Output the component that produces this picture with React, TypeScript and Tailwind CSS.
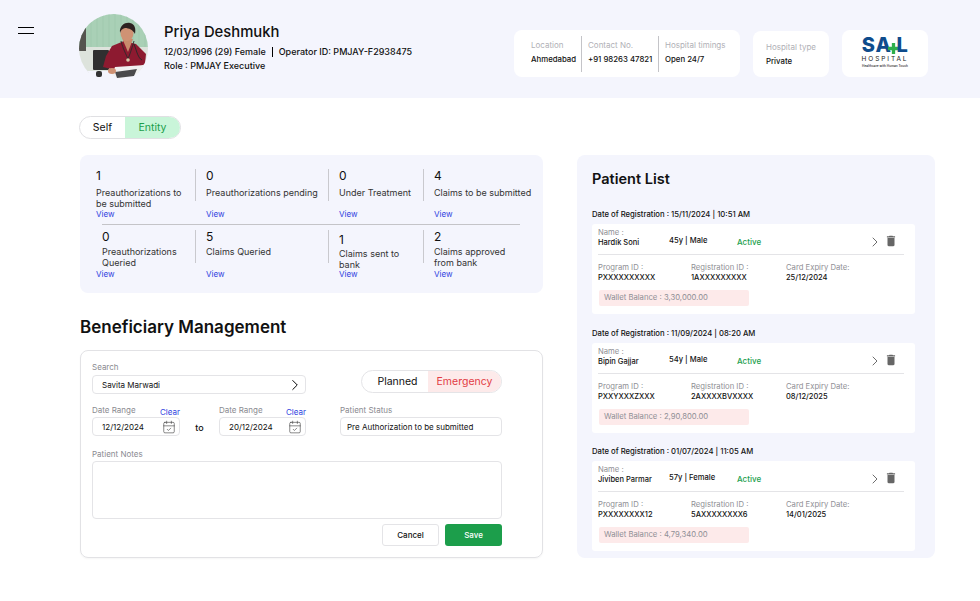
import { CalendarCheck, ChevronRight } from "lucide-react";
import { MdDelete } from "react-icons/md";

const topStats = [
  { n: 1, label: "Preauthorizations to be submitted", w: "w-[99px]", first: true },
  { n: 0, label: "Preauthorizations pending", w: "w-[133px]" },
  { n: 0, label: "Under Treatment", w: "w-[95px]" },
  { n: 4, label: "Claims to be submitted", w: "w-[112px]" },
];

const patients = [
  {
    reg: "15/11/2024 | 10:51 AM",
    name: "Hardik Soni",
    age: "45y | Male",
    program: "PXXXXXXXXXX",
    regId: "1AXXXXXXXXX",
    expiry: "25/12/2024",
    wallet: "3,30,000.00",
  },
  {
    reg: "11/09/2024 | 08:20 AM",
    name: "Bipin Gajjar",
    age: "54y | Male",
    program: "PXXYXXXZXXX",
    regId: "2AXXXXBVXXXX",
    expiry: "08/12/2025",
    wallet: "2,90,800.00",
  },
  {
    reg: "01/07/2024 | 11:05 AM",
    name: "Jiviben Parmar",
    age: "57y | Female",
    program: "PXXXXXXXX12",
    regId: "5AXXXXXXXX6",
    expiry: "14/01/2025",
    wallet: "4,79,340.00",
  },
];

function Avatar() {
  return (
    <svg viewBox="0 0 69 69" className="h-[69px] w-[69px] shrink-0 self-start rounded-full">
      <rect width="69" height="69" fill="#f4f5fd" />
      <rect width="69" height="33" fill="#a9d0b6" />
      {[6, 12, 18, 24, 30, 36, 42, 48, 54, 60, 66].map((x) => (
        <line key={x} x1={x} y1="0" x2={x} y2="33" stroke="#a0c9ae" strokeWidth="1" />
      ))}
      <rect y="33" width="69" height="26" fill="#dde3dc" />
      <rect x="0" y="13" width="7" height="24" fill="#55544f" />
      <rect x="14" y="36" width="16" height="20" rx="1" fill="#2f2f30" />
      <path d="M33 32 45 27 57 30 67 40 66 50 60 53 32 55 24 53 27 42Z" fill="#8d1a30" />
      <path d="M43 24 49 38 54 25Z" fill="#c98a6c" />
      <ellipse cx="48" cy="19" rx="6.500" ry="8" fill="#cf9274" />
      <path d="M41 19C40 11 47 8 51 9 56 10 57 15 56 20 54 16 50 14 46 14 43 15 42 16 41 19Z" fill="#2d2220" />
      <path d="M42 27C44 35 47 40 49 45 51 40 53 34 55 27" fill="none" stroke="#2e2a2a" strokeWidth="0.9" />
      <path d="M55 30C58 38 59 44 63 46" fill="none" stroke="#2e2a2a" strokeWidth="1" />
      <circle cx="49" cy="46" r="1.800" fill="#d8c9a8" />
      <rect y="57" width="69" height="12" fill="#f4f5fd" />
      <path d="M36 53 66 51 60 60 40 65 33 61Z" fill="#f1f1f1" />
      <path d="M36 58 58 55 55 62 38 64Z" fill="#4a4a4c" />
      <ellipse cx="33" cy="57" rx="4" ry="3" fill="#cf9274" />
      <rect x="17" y="57" width="6" height="6" rx="2" fill="#333" />
    </svg>
  );
}

function Logo() {
  return (
    <div className="mt-[-1px] flex flex-col items-center">
      <div className="flex h-[15px] items-center text-[20px] leading-[15px] font-extrabold tracking-[0.5px] text-[#0f4c8c]">
        <span>S</span>
        <span>A</span>
        <svg viewBox="0 0 10 10" className="-mx-[3px] mt-[6px] h-[11px] w-[11px] text-[#2fae4a]">
          <path d="M3.5 0h3v3.5H10v3H6.500V10h-3V6.500H0v-3h3.500Z" fill="currentColor" />
        </svg>
        <span>L</span>
      </div>
      <div className="mt-[3px] text-[6.500px] leading-[7px] tracking-[1.900px] text-[#222]">HOSPITAL</div>
      <div className="mt-[1px] text-[3.200px] leading-[4px] font-medium text-[#222]">Healthcare with Human Touch</div>
    </div>
  );
}

function InfoCell({ label, value, className }: { label: string; value: string; className: string }) {
  return (
    <div className={className}>
      <div className="text-[8px] leading-[10px] text-[#b0b0b6]">{label}</div>
      <div className="mt-[4px] text-[7.800px] leading-[10px] font-medium text-[#111]">{value}</div>
    </div>
  );
}

function Header() {
  return (
    <header className="flex h-[98px] bg-[#f4f5fd]">
      <div className="mt-[27px] ml-[18px] flex h-[7px] w-[16px] flex-col justify-between">
        <div className="h-px bg-black" />
        <div className="h-px bg-black" />
      </div>
      <div className="mt-[14px] ml-[45px]">
        <Avatar />
      </div>
      <div className="mt-[23px] ml-[16px] w-[350px] text-[#111]">
        <div className="text-[14.800px] leading-[19px] font-medium">Priya Deshmukh</div>
        <div className="mt-[3px] flex items-center text-[9px] leading-[14px] font-medium">
          12/03/1996 (29) Female
          <span className="mx-[6px] h-[10px] w-px bg-black" />
          Operator ID: PMJAY-F2938475
        </div>
        <div className="text-[9px] leading-[14px] font-medium">Role : PMJAY Executive</div>
      </div>
      <div className="mt-[30px] flex h-[47px] w-[226px] items-center rounded-[8px] bg-white pb-[4px] pl-[17px]">
        <InfoCell label="Location" value="Ahmedabad" className="w-[50px]" />
        <div className="mt-[4px] h-[36px] w-px bg-[#c4c4c8]" />
        <InfoCell label="Contact No." value="+91 98263 47821" className="w-[76px] pl-[6px]" />
        <div className="mt-[4px] h-[36px] w-px bg-[#c4c4c8]" />
        <InfoCell label="Hospital timings" value="Open 24/7" className="pl-[6px]" />
      </div>
      <div className="mt-[31px] ml-[13px] flex h-[46px] w-[76px] items-center rounded-[8px] bg-white pl-[13px]">
        <InfoCell label="Hospital type" value="Private" className="" />
      </div>
      <div className="mt-[30px] ml-[13px] flex h-[47px] w-[86px] items-center justify-center rounded-[8px] bg-white">
        <Logo />
      </div>
    </header>
  );
}

function StatCell({ n, label, w, first }: { n: number; label: string; w: string; first?: boolean }) {
  return (
    <div className={w}>
      <div className={first ? "h-[32px] pr-[8px]" : "h-[32px] border-l border-[#c9c9ce] pl-[10px]"}>
        <div className="text-[12px] leading-[14px] text-[#111]">{n}</div>
        <div className="mt-[4px] text-[9px] leading-[11px] text-[#333]">{label}</div>
      </div>
      <a className={first ? "mt-[8px] block text-[8px] leading-[10px] text-[#2f3fe0]" : "mt-[8px] block pl-[11px] text-[8px] leading-[10px] text-[#2f3fe0]"}>
        View
      </a>
    </div>
  );
}

function BottomStat({ n, label, w, first, low }: { n: number; label: string; w: string; first?: boolean; low?: boolean }) {
  let box = "h-[33px] border-l border-[#c9c9ce] pl-[10px]";
  if (first) box = "h-[33px] pl-[6px]";
  if (low) box = "h-[33px] border-l border-[#c9c9ce] pt-[3px] pr-[16px] pl-[10px]";
  return (
    <div className={w}>
      <div className={box}>
        <div className="text-[12px] leading-[14px] text-[#111]">{n}</div>
        <div className={low ? "mt-[1px] text-[9px] leading-[11px] text-[#333]" : "mt-[2px] text-[9px] leading-[11px] text-[#333]"}>{label}</div>
      </div>
      <a className={first ? "mt-[6px] block text-[8px] leading-[10px] text-[#2f3fe0]" : "mt-[6px] block pl-[11px] text-[8px] leading-[10px] text-[#2f3fe0]"}>
        View
      </a>
    </div>
  );
}

function StatsPanel() {
  return (
    <section className="h-[138px] rounded-[8px] bg-[#f4f5fd] pt-[14px] pl-[16px]">
      <div className="flex">
        {topStats.map((s) => (
          <StatCell key={s.label} n={s.n} label={s.label} w={s.w} first={s.first} />
        ))}
      </div>
      <div className="mt-[5px] ml-[6px] h-px w-[418px] bg-[#c4c4c8]" />
      <div className="mt-[5px] flex">
        <BottomStat n={0} label="Preauthorizations Queried" w="w-[99px]" first />
        <BottomStat n={5} label="Claims Queried" w="w-[133px]" />
        <BottomStat n={1} label="Claims sent to bank" w="w-[95px]" low />
        <BottomStat n={2} label="Claims approved from bank" w="w-[90px]" />
      </div>
    </section>
  );
}

function FieldBox({ children, className }: { children: React.ReactNode; className: string }) {
  return (
    <div className={"flex h-[19px] items-center justify-between rounded-[4px] border border-[#e4e4e7] bg-white text-[8px] text-[#111] " + className}>
      {children}
    </div>
  );
}

function DateField({ value, className }: { value: string; className: string }) {
  return (
    <div className={className}>
      <div className="flex h-[12px] items-start justify-between">
        <span className="text-[8px] leading-[10px] text-[#8a8a90]">Date Range</span>
        <span className="mt-[2px] text-[8px] leading-[10px] text-[#2f3fe0]">Clear</span>
      </div>
      <FieldBox className="pr-[3px] pl-[9px]">
        {value}
        <CalendarCheck size={14} strokeWidth={1} className="text-[#333]" />
      </FieldBox>
    </div>
  );
}

function BeneficiaryForm() {
  return (
    <section className="mt-[23px]">
      <h2 className="text-[17px] leading-[22px] font-semibold text-[#111]">Beneficiary Management</h2>
      <div className="mt-[12px] h-[208px] rounded-[8px] border border-[#e2e2e5] pt-[11px] pl-[11px] shadow-[0_1px_2px_rgba(0,0,0,0.04)]">
        <div className="flex">
          <div className="w-[214px]">
            <div className="text-[8px] leading-[10px] text-[#8a8a90]">Search</div>
            <FieldBox className="mt-[3px] pr-[1px] pl-[9px]">
              Savita Marwadi
              <ChevronRight size={18} strokeWidth={1.3} className="text-black" />
            </FieldBox>
          </div>
          <div className="mt-[8px] ml-[55px] flex h-[23px] w-[141px] overflow-hidden rounded-full border border-[#e4e4e7] text-[10.500px]">
            <div className="flex w-[66px] items-center justify-center pl-[5px] text-[#111]">Planned</div>
            <div className="flex flex-1 items-center justify-center bg-[#fdeaea] text-[#e23b44]">Emergency</div>
          </div>
        </div>
        <div className="mt-[11px] flex">
          <DateField value="12/12/2024" className="w-[88px]" />
          <div className="mt-[17px] w-[39px] text-center text-[9px] leading-[12px] font-medium text-[#111]">to</div>
          <DateField value="20/12/2024" className="w-[87px]" />
          <div className="ml-[34px] w-[162px]">
            <div className="h-[12px] text-[8px] leading-[10px] text-[#8a8a90]">Patient Status</div>
            <FieldBox className="pl-[6px]">Pre Authorization to be submitted</FieldBox>
          </div>
        </div>
        <div className="mt-[13px] text-[8px] leading-[10px] text-[#8a8a90]">Patient Notes</div>
        <div className="mt-[2px] h-[58px] w-[410px] rounded-[4px] border border-[#e4e4e7]" />
        <div className="mt-[5px] flex w-[410px] justify-end gap-[6px] text-[8px] font-medium">
          <button className="h-[22px] w-[57px] rounded-[3px] border border-[#e4e4e7] bg-white text-[#111]">Cancel</button>
          <button className="h-[22px] w-[57px] rounded-[3px] bg-[#1c9e4b] text-white">Save</button>
        </div>
      </div>
    </section>
  );
}

function Detail({ label, value, className }: { label: string; value: string; className: string }) {
  return (
    <div className={className}>
      <div className="text-[7.700px] leading-[10px] text-[#8f8f95]">{label}</div>
      <div className="text-[7.500px] leading-[10px] font-medium text-[#111]">{value}</div>
    </div>
  );
}

function PatientCard({ p }: { p: (typeof patients)[number] }) {
  return (
    <div>
      <div className="text-[7.700px] leading-[10px] font-medium text-[#111]">Date of Registration : {p.reg}</div>
      <div className="mt-[4px] h-[90px] w-[323px] rounded-[3px] bg-white pt-[4px] pl-[6px]">
        <div className="flex h-[27px] w-[306px] border-b border-[#e4e4e7]">
          <Detail label="Name :" value={p.name} className="w-[71px]" />
          <div className="mt-[8px] w-[68px] text-[7.600px] leading-[10px] font-medium text-[#111]">{p.age}</div>
          <div className="mt-[9px] w-[130px] text-[8px] leading-[10px] font-medium text-[#22a04f]">Active</div>
          <ChevronRight size={16} strokeWidth={1} className="mt-[6px] text-[#222]" />
          <MdDelete size={14} className="mt-[6px] ml-[1px] text-[#666]" />
        </div>
        <div className="mt-[8px] flex">
          <Detail label="Program ID :" value={p.program} className="w-[93px]" />
          <Detail label="Registration ID :" value={p.regId} className="w-[95px]" />
          <Detail label="Card Expiry Date:" value={p.expiry} className="" />
        </div>
        <div className="mt-[7px] ml-px flex h-[16px] w-[150px] items-center rounded-[2px] bg-[#fdeaea] pl-[5px] text-[7.700px] text-[#8f8f95]">
          Wallet Balance : {p.wallet}
        </div>
      </div>
    </div>
  );
}

function PatientList() {
  return (
    <aside className="h-[403px] w-[358px] rounded-[8px] bg-[#f4f5fd] pt-[15px] pl-[15px]">
      <h2 className="text-[14.500px] leading-[18px] font-semibold text-[#111]">Patient List</h2>
      <div className="mt-[22px] flex flex-col gap-[14.500px]">
        {patients.map((p) => (
          <PatientCard key={p.name} p={p} />
        ))}
      </div>
    </aside>
  );
}

export default function App() {
  return (
    <div className="min-h-[601px] w-full overflow-hidden bg-white font-[Inter,sans-serif]">
      <Header />
      <div className="pl-[79px]">
        <div className="mt-[18px] flex h-[23px] w-[102px] overflow-hidden rounded-full border border-[#e0e0e3] text-[10.500px]">
          <div className="flex w-[45px] items-center justify-center text-[#111]">Self</div>
          <div className="flex flex-1 items-center justify-center bg-[#c9f5d9] text-[#1c9e4b]">Entity</div>
        </div>
        <div className="mt-[16px] flex">
          <div className="ml-px w-[463px]">
            <StatsPanel />
            <BeneficiaryForm />
          </div>
          <div className="ml-[34px]">
            <PatientList />
          </div>
        </div>
      </div>
    </div>
  );
}
